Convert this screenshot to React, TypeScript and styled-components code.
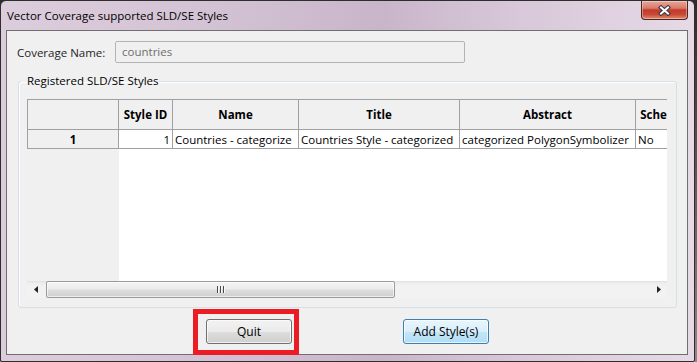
import React from "react";
import styled, { createGlobalStyle } from "styled-components";

const GlobalStyle = createGlobalStyle`
  html, body {
    margin: 0;
    padding: 0;
  }
  body {
    width: 697px;
    height: 362px;
    overflow: hidden;
    background: #5e5e5e;
    font-family: "Open Sans", "Liberation Sans", sans-serif;
    font-size: 11.5px;
    color: #000;
  }
`;

const Desktop = styled.div`
  width: 697px;
  height: 362px;
  display: flex;
  background: linear-gradient(#2c2c2c, #8a8a8a);
`;

const Window = styled.div`
  position: relative;
  width: 695px;
  height: 362px;
  box-sizing: border-box;
  border: 1px solid #2e2e2e;
  border-radius: 6px 6px 2px 2px;
  padding: 0 6px 6px 5px;
  display: flex;
  flex-direction: column;
  background: linear-gradient(
    90deg,
    #dccddc 0%,
    #d3c2d4 30%,
    #c9b5ca 55%,
    #d8c8d9 75%,
    #e6dae6 100%
  );
`;

const TitleBar = styled.div`
  height: 29px;
  display: flex;
  align-items: flex-start;
  justify-content: space-between;
`;

const Title = styled.div`
  padding: 7px 0 0 1px;
  line-height: 16px;
  font-size: 11.5px;
  color: #000;
`;

const CloseButton = styled.div`
  width: 47px;
  height: 19px;
  box-sizing: border-box;
  border: 1px solid #4e2520;
  border-top: none;
  border-radius: 0 0 4px 4px;
  background: linear-gradient(
    #e9a898 0%,
    #d9786a 40%,
    #c23a2a 50%,
    #c84a36 75%,
    #e08a70 100%
  );
  box-shadow: inset 0 0 0 1px rgba(255, 255, 255, 0.35);
  display: flex;
  align-items: center;
  justify-content: center;
`;

const Client = styled.div`
  height: 325px;
  box-sizing: border-box;
  border: 1px solid #6f6f6f;
  background: #f0f0f0;
  display: flex;
  flex-direction: column;
`;

const FieldRow = styled.div`
  display: flex;
  align-items: center;
  margin: 10px 0 0 10px;
  height: 22px;
`;

const Label = styled.div`
  width: 98px;
  color: #1e1e1e;
`;

const TextInput = styled.div`
  width: 350px;
  height: 22px;
  box-sizing: border-box;
  border: 1px solid #b4b4b4;
  border-radius: 2px;
  background: #f0f0f0;
  color: #6d6d6d;
  padding-left: 6px;
  line-height: 20px;
`;

const GroupBox = styled.fieldset`
  margin: 10px 10px 0 11px;
  padding: 10px 9px 9px 8px;
  border: 1px solid #d5dfe5;
  border-radius: 3px;
  box-shadow: inset 1px 1px 0 #fff;
  min-width: 0;
`;

const Legend = styled.legend`
  margin-left: -6px;
  padding: 0 1px 0 6px;
  line-height: 16px;
  color: #000;
`;

const Viewport = styled.div`
  width: 640px;
  height: 182px;
  overflow: hidden;
  background: linear-gradient(90deg, #f0f0f0 92px, #fff 92px);
`;

const columns = "92px 54px 126px 161px 176px 112px";

const GridRow = styled.div<{ $header?: boolean }>`
  display: grid;
  grid-template-columns: ${columns};
  width: max-content;
  height: ${(p) => (p.$header ? "31px" : "19px")};
`;

const Cell = styled.div<{ $header?: boolean; $first?: boolean; $align?: string }>`
  box-sizing: border-box;
  border-right: 1px solid #a0a0a0;
  border-bottom: 1px solid #a0a0a0;
  border-top: ${(p) => (p.$header ? "1px solid #a0a0a0" : "none")};
  border-left: ${(p) => (p.$first ? "1px solid #a0a0a0" : "none")};
  background: ${(p) => (p.$header || p.$first ? "#f0f0f0" : "#fff")};
  font-weight: ${(p) => (p.$header || p.$first ? 700 : 400)};
  padding: 0 2px;
  display: flex;
  align-items: center;
  justify-content: ${(p) =>
    p.$align === "center" ? "center" : p.$align === "right" ? "flex-end" : "flex-start"};
  white-space: nowrap;
  overflow: hidden;
`;

const ScrollBar = styled.div`
  width: 640px;
  height: 17px;
  display: flex;
  align-items: stretch;
  background: linear-gradient(#e9e9e9, #f2f2f2 30%, #f2f2f2);
  box-shadow: inset 0 1px 0 #e2e2e2;
`;

const ArrowButton = styled.div`
  width: 17px;
  display: flex;
  align-items: center;
  justify-content: center;
`;

const Track = styled.div`
  flex: 1;
  display: flex;
  align-items: stretch;
  padding: 0 2px;
`;

const Thumb = styled.div`
  width: 349px;
  box-sizing: border-box;
  border: 1px solid #9a9a9a;
  border-radius: 2px;
  background: linear-gradient(#f4f4f4 0%, #ececec 45%, #dcdcdc 55%, #d0d0d0 100%);
  box-shadow: inset 0 0 0 1px rgba(255, 255, 255, 0.6);
  display: flex;
  align-items: center;
  justify-content: center;
`;

const ButtonRow = styled.div`
  margin-top: 11px;
  display: flex;
  justify-content: center;
  gap: 111px;
  padding-left: 1px;
`;

const Button = styled.div<{ $default?: boolean }>`
  width: 86px;
  height: 25px;
  box-sizing: border-box;
  border: 1px solid ${(p) => (p.$default ? "#3c7fb1" : "#707070")};
  border-radius: 3px;
  background: ${(p) =>
    p.$default
      ? "linear-gradient(#e8f6fd 0%, #d8effb 50%, #c2e6f8 52%, #b1dcf4 100%)"
      : "linear-gradient(#f2f2f2 0%, #ebebeb 50%, #dddddd 52%, #cfcfcf 100%)"};
  box-shadow: inset 0 0 0 1px rgba(255, 255, 255, 0.7);
  display: flex;
  align-items: center;
  justify-content: center;
  font-size: 12px;
  color: #000;
`;

const Highlight = styled.div`
  position: absolute;
  left: 192px;
  top: 308px;
  width: 106px;
  height: 46px;
  box-sizing: border-box;
  border: 5px solid #ec1c24;
  pointer-events: none;
`;

const CloseGlyph = () => (
  <svg width="13" height="11" viewBox="0 0 13 11">
    <g strokeLinecap="square">
      <path d="M3 2.5 L10 8.5 M10 2.5 L3 8.5" stroke="#3a3a4a" strokeWidth="4.2" />
      <path d="M3 2.5 L10 8.5 M10 2.5 L3 8.5" stroke="#fff" strokeWidth="2" />
    </g>
  </svg>
);

const Arrow = ({ dir }: { dir: "left" | "right" }) => (
  <svg width="4" height="7" viewBox="0 0 4 7">
    <path d={dir === "left" ? "M4 0 L0 3.5 L4 7 Z" : "M0 0 L4 3.5 L0 7 Z"} fill="#222" />
  </svg>
);

const Grip = () => (
  <svg width="8" height="7" viewBox="0 0 8 7">
    <path d="M0.5 0 V7 M3.5 0 V7 M6.5 0 V7" stroke="#4a4a4a" strokeWidth="1" />
    <path d="M1.5 0 V7 M4.5 0 V7 M7.5 0 V7" stroke="#fafafa" strokeWidth="1" />
  </svg>
);

const headers = ["", "Style ID", "Name", "Title", "Abstract", "Schema Validated"];

export default function App() {
  return (
    <>
      <GlobalStyle />
      <Desktop>
        <Window>
          <TitleBar>
            <Title>Vector Coverage supported SLD/SE Styles</Title>
            <CloseButton>
              <CloseGlyph />
            </CloseButton>
          </TitleBar>
          <Client>
            <FieldRow>
              <Label>Coverage Name:</Label>
              <TextInput>countries</TextInput>
            </FieldRow>
            <GroupBox>
              <Legend>Registered SLD/SE Styles</Legend>
              <Viewport>
                <GridRow $header>
                  {headers.map((h, i) => (
                    <Cell key={i} $header $first={i === 0} $align="center">
                      {h}
                    </Cell>
                  ))}
                </GridRow>
                <GridRow>
                  <Cell $first $align="center">1</Cell>
                  <Cell $align="right">1</Cell>
                  <Cell>Countries - categorize</Cell>
                  <Cell>Countries Style - categorized</Cell>
                  <Cell>categorized PolygonSymbolizer</Cell>
                  <Cell>No</Cell>
                </GridRow>
              </Viewport>
              <ScrollBar>
                <ArrowButton>
                  <Arrow dir="left" />
                </ArrowButton>
                <Track>
                  <Thumb>
                    <Grip />
                  </Thumb>
                </Track>
                <ArrowButton>
                  <Arrow dir="right" />
                </ArrowButton>
              </ScrollBar>
            </GroupBox>
            <ButtonRow>
              <Button>Quit</Button>
              <Button $default>Add Style(s)</Button>
            </ButtonRow>
          </Client>
          <Highlight />
        </Window>
      </Desktop>
    </>
  );
}
